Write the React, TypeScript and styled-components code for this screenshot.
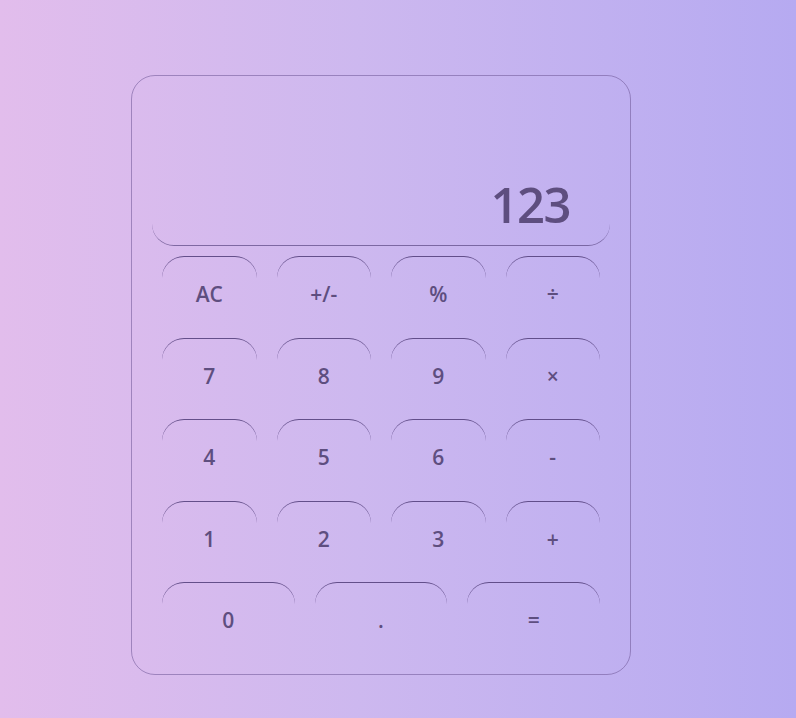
import React from "react";
import styled, { createGlobalStyle } from "styled-components";

const Global = createGlobalStyle`
  html, body { margin: 0; padding: 0; }
  body {
    width: 796px;
    height: 718px;
    background: linear-gradient(90deg, #e2bdec 0%, #cdb8ef 45%, #b6aaf1 100%);
    font-family: "Open Sans", "DejaVu Sans", sans-serif;
    overflow: hidden;
  }
`;

const Page = styled.div`
  display: flex;
  justify-content: flex-start;
  padding: 75px 0 0 131px;
`;

const Calculator = styled.div`
  width: 500px;
  height: 600px;
  box-sizing: border-box;
  border: 1px solid rgba(110, 85, 150, 0.55);
  border-radius: 24px;
  display: flex;
  flex-direction: column;
  padding: 0 20px;
`;

const Display = styled.div`
  height: 170px;
  box-sizing: border-box;
  border-bottom: 1px solid rgba(90, 70, 130, 0.7);
  border-radius: 0 0 22px 22px;
  display: flex;
  align-items: flex-end;
  justify-content: flex-end;
  padding: 0 40px 8px 0;
  font-size: 49px;
  font-weight: 600;
  color: #5e4e7f;
  letter-spacing: -1.5px;
`;

const Keys = styled.div`
  display: flex;
  flex-direction: column;
  gap: 5px;
  padding: 10px 10px 0;
`;

const Row = styled.div<{ $cols: number }>`
  display: grid;
  grid-template-columns: repeat(${(p) => p.$cols}, 1fr);
  column-gap: 20px;
`;

const Key = styled.button`
  height: 76.5px;
  background: transparent;
  border: none;
  border-top: 1px solid rgba(80, 60, 120, 0.85);
  border-radius: 22px 22px 0 0;
  font-family: "Open Sans", "DejaVu Sans", sans-serif;
  font-size: 21px;
  font-weight: 600;
  color: #5e4e7f;
  padding: 0 0 1px;
  display: flex;
  align-items: center;
  justify-content: center;
  cursor: pointer;
`;

const rows = [
  ["AC", "+/-", "%", "÷"],
  ["7", "8", "9", "×"],
  ["4", "5", "6", "-"],
  ["1", "2", "3", "+"],
];

export default function App() {
  return (
    <>
      <Global />
      <Page>
        <Calculator>
          <Display>123</Display>
          <Keys>
            {rows.map((r, i) => (
              <Row key={i} $cols={4}>
                {r.map((k) => (
                  <Key key={k}>{k}</Key>
                ))}
              </Row>
            ))}
            <Row $cols={3}>
              <Key>0</Key>
              <Key>.</Key>
              <Key>=</Key>
            </Row>
          </Keys>
        </Calculator>
      </Page>
    </>
  );
}
